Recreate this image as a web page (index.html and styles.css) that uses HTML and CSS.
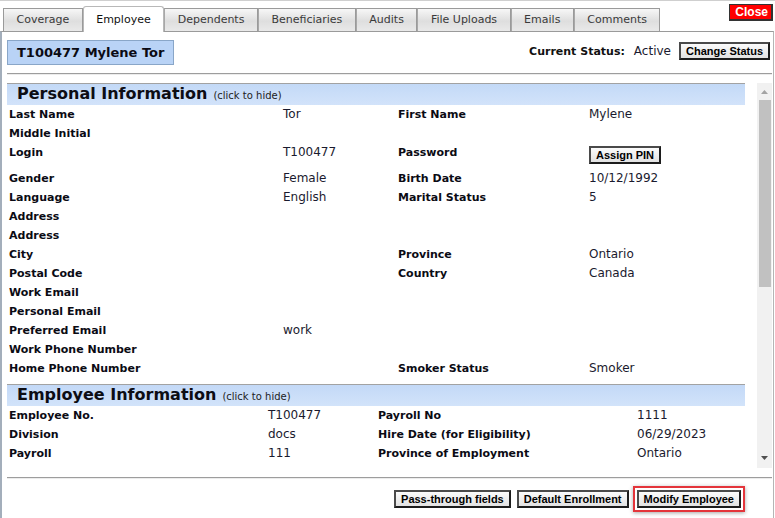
FILE: index.html
```html
<!DOCTYPE html>
<html>
<head>
<meta charset="utf-8">
<link rel="stylesheet" href="styles.css">
</head>
<body>
<div class="frame">
  <div class="tabs">
    <div class="tab">Coverage</div>
    <div class="tab active">Employee</div>
    <div class="tab">Dependents</div>
    <div class="tab">Beneficiaries</div>
    <div class="tab">Audits</div>
    <div class="tab">File Uploads</div>
    <div class="tab">Emails</div>
    <div class="tab">Comments</div>
  </div>
  <div class="close">Close</div>
  <div class="panel">
    <div class="head">
      <div class="name">T100477 Mylene Tor</div>
      <div class="status">
        <span class="status-label">Current Status:</span>
        <span class="status-value">Active</span>
        <button class="btn">Change Status</button>
      </div>
    </div>
    <hr class="rule">
    <div class="scroll">
      <div class="scroll-content">
        <section class="sec">
          <div class="sec-title"><span class="sec-name">Personal Information</span><span class="sec-hint">(click to hide)</span></div>
          <div class="grid personal">
            <div class="lbl">Last Name</div><div class="val">Tor</div><div class="lbl">First Name</div><div class="val">Mylene</div>
            <div class="lbl">Middle Initial</div><div class="val"></div><div class="lbl"></div><div class="val"></div>
            <div class="lbl">Login</div><div class="val">T100477</div><div class="lbl">Password</div><div class="val btncell"><button class="btn">Assign PIN</button></div>
            <div class="lbl">Gender</div><div class="val">Female</div><div class="lbl">Birth Date</div><div class="val">10/12/1992</div>
            <div class="lbl">Language</div><div class="val">English</div><div class="lbl">Marital Status</div><div class="val">5</div>
            <div class="lbl">Address</div><div class="val"></div><div class="lbl"></div><div class="val"></div>
            <div class="lbl">Address</div><div class="val"></div><div class="lbl"></div><div class="val"></div>
            <div class="lbl">City</div><div class="val"></div><div class="lbl">Province</div><div class="val">Ontario</div>
            <div class="lbl">Postal Code</div><div class="val"></div><div class="lbl">Country</div><div class="val">Canada</div>
            <div class="lbl">Work Email</div><div class="val"></div><div class="lbl"></div><div class="val"></div>
            <div class="lbl">Personal Email</div><div class="val"></div><div class="lbl"></div><div class="val"></div>
            <div class="lbl">Preferred Email</div><div class="val">work</div><div class="lbl"></div><div class="val"></div>
            <div class="lbl">Work Phone Number</div><div class="val"></div><div class="lbl"></div><div class="val"></div>
            <div class="lbl">Home Phone Number</div><div class="val"></div><div class="lbl">Smoker Status</div><div class="val">Smoker</div>
          </div>
        </section>
        <section class="sec">
          <div class="sec-title"><span class="sec-name">Employee Information</span><span class="sec-hint">(click to hide)</span></div>
          <div class="grid employee">
            <div class="lbl">Employee No.</div><div class="val">T100477</div><div class="lbl">Payroll No</div><div class="val">1111</div>
            <div class="lbl">Division</div><div class="val">docs</div><div class="lbl">Hire Date (for Eligibility)</div><div class="val">06/29/2023</div>
            <div class="lbl">Payroll</div><div class="val">111</div><div class="lbl">Province of Employment</div><div class="val">Ontario</div>
            <div class="lbl low">Occupation</div><div class="val low">Writer</div><div class="lbl low">Employment Status</div><div class="val low">Full Time</div>
            <div class="lbl">Class</div><div class="val">A</div><div class="lbl">Salary</div><div class="val">55000</div>
            <div class="lbl">Salary Type</div><div class="val">Annual</div><div class="lbl">Salary Effective Date</div><div class="val">06/29/2023</div>
            <div class="lbl">Hours per Week</div><div class="val">37.5</div><div class="lbl">Benefit Start Date</div><div class="val">06/29/2023</div>
          </div>
        </section>
      </div>
      <div class="scrollbar">
        <div class="sb-btn up"><svg width="7" height="4" viewBox="0 0 7 4"><path d="M0 4 L3.5 0 L7 4 Z" fill="#a3a3a3"/></svg></div>
        <div class="sb-track"><div class="sb-thumb"></div></div>
        <div class="sb-btn down"><svg width="7" height="4" viewBox="0 0 7 4"><path d="M0 0 L7 0 L3.5 4 Z" fill="#505050"/></svg></div>
      </div>
    </div>
    <hr class="rule bottom-rule">
    <div class="actions">
      <button class="btn">Pass-through fields</button>
      <button class="btn">Default Enrollment</button>
      <span class="highlight"><button class="btn">Modify Employee</button></span>
    </div>
  </div>
</div>
</body>
</html>
```
FILE: styles.css
```css
html, body {
  margin: 0;
  padding: 0;
  background: #fff;
}
body {
  font-family: "DejaVu Sans", Verdana, sans-serif;
  color: #111;
}
.frame {
  position: relative;
  width: 775px;
  height: 518px;
  border-top: 1px solid #cfcfcf;
  box-sizing: border-box;
  overflow: hidden;
}
.tabs {
  display: flex;
  align-items: flex-end;
  height: 30px;
  padding-left: 3px;
}
.tab {
  height: 22px;
  line-height: 22px;
  padding: 0 12.5px;
  border: 1px solid #9a9a9a;
  border-bottom: none;
  background: linear-gradient(#f7f7f7, #dedede 55%, #e9e9e9);
  font-size: 11px;
  color: #3a3a3a;
  white-space: nowrap;
}
.tab + .tab {
  border-left-color: #a8a8a8;
}
.tab.active {
  height: 25px;
  line-height: 25px;
  background: #fff;
  color: #111;
  border-color: #b8b8b8;
  border-radius: 3px 3px 0 0;
  margin-bottom: -1px;
  position: relative;
  z-index: 1;
}
.close {
  position: absolute;
  top: 3px;
  right: 2px;
  background: #f00;
  color: #fff;
  font-family: "Liberation Sans", Arial, sans-serif;
  font-weight: bold;
  font-size: 12px;
  line-height: 14px;
  padding: 0 3px 0 5px;
  border: 1px solid #333;
  border-bottom-width: 2px;
  border-right-width: 2px;
}
.panel {
  border-top: 1px solid #9a9a9a;
  border-left: 2px solid #a3aebb;
  border-right: 1px solid #b5b5b5;
  width: 774px;
  box-sizing: border-box;
  height: 487px;
  padding: 0 1px 0 5px;
}
.head {
  display: flex;
  justify-content: space-between;
  align-items: flex-start;
  margin-top: 8px;
}
.name {
  height: 23px;
  line-height: 23px;
  padding: 0 9px;
  background: #b9d3f6;
  border: 1px solid #89a6c8;
  font-weight: bold;
  font-size: 13px;
  color: #0b0b14;
}
.status {
  display: flex;
  align-items: center;
  margin-top: 2px;
  margin-right: 2px;
}
.status-label {
  font-weight: bold;
  font-size: 11px;
  margin-right: 9px;
}
.status-value {
  font-size: 12px;
  margin-right: 8px;
  color: #1a1a2e;
}
.btn {
  font-family: "Liberation Sans", Arial, sans-serif;
  font-weight: bold;
  font-size: 11px;
  color: #000;
  height: 18px;
  padding: 0 5px;
  margin: 0;
  border: 2px solid;
  border-color: #4a4a4a #1c1c1c #1c1c1c #4a4a4a;
  background: linear-gradient(#fbfbfb, #e2e2e2);
  line-height: 14px;
  cursor: pointer;
}
.rule {
  height: 0;
  border: 0;
  border-top: 1px solid #9d9d9d;
  border-bottom: 1px solid #ececec;
  margin: 8px 0 8px 0;
}
.scroll {
  display: flex;
  height: 385px;
}
.scroll-content {
  flex: 1;
  overflow: hidden;
}
.scrollbar {
  width: 15px;
  background: #f1f1f1;
  display: flex;
  flex-direction: column;
}
.sb-btn {
  height: 17px;
  display: flex;
  align-items: center;
  justify-content: center;
  flex: none;
}
.sb-btn.up {
  align-items: flex-start;
  padding-top: 7px;
  box-sizing: border-box;
}
.sb-btn.down {
  align-items: flex-end;
  padding-bottom: 8px;
  box-sizing: border-box;
}
.sb-track {
  flex: 1;
}
.sb-thumb {
  height: 187px;
  margin: 0 1px 0 2px;
  background: #c1c1c1;
}
.sec {
  margin-right: 12px;
}
.sec + .sec {
  margin-top: 6px;
}
.sec-title {
  height: 21px;
  border-top: 1px solid #a2a2a2;
  background: linear-gradient(#c3d9f7, #d2e3fa);
  padding-left: 10px;
  display: flex;
  align-items: baseline;
  white-space: nowrap;
}
.sec-name {
  font-weight: bold;
  font-size: 16px;
  line-height: 20px;
  color: #0d0d14;
}
.sec-hint {
  font-size: 10px;
  margin-left: 6px;
  color: #222;
}
.grid {
  display: grid;
  padding-left: 2px;
  grid-auto-rows: minmax(19px, auto);
}
.personal {
  grid-template-columns: 274px 115px 191px 1fr;
}
.employee {
  grid-template-columns: 259px 110px 259px 1fr;
}
.lbl {
  font-weight: bold;
  font-size: 11px;
  line-height: 19px;
  color: #0b0b14;
  white-space: nowrap;
}
.val {
  font-size: 12px;
  line-height: 19px;
  color: #1a1a2e;
  white-space: nowrap;
}
.btncell {
  padding: 3px 0 5px;
  line-height: 0;
}
.low {
  padding-top: 6px;
}
.bottom-rule {
  margin: 9px 0 7px 0;
}
.actions {
  display: flex;
  justify-content: flex-end;
  align-items: center;
  gap: 6px;
  margin-right: 27px;
}
.highlight {
  display: inline-flex;
  padding: 2px;
  border: 2px solid #e4353b;
  margin-left: -2px;
  box-shadow: 0 1px 4px rgba(0, 0, 0, 0.35);
}
```
